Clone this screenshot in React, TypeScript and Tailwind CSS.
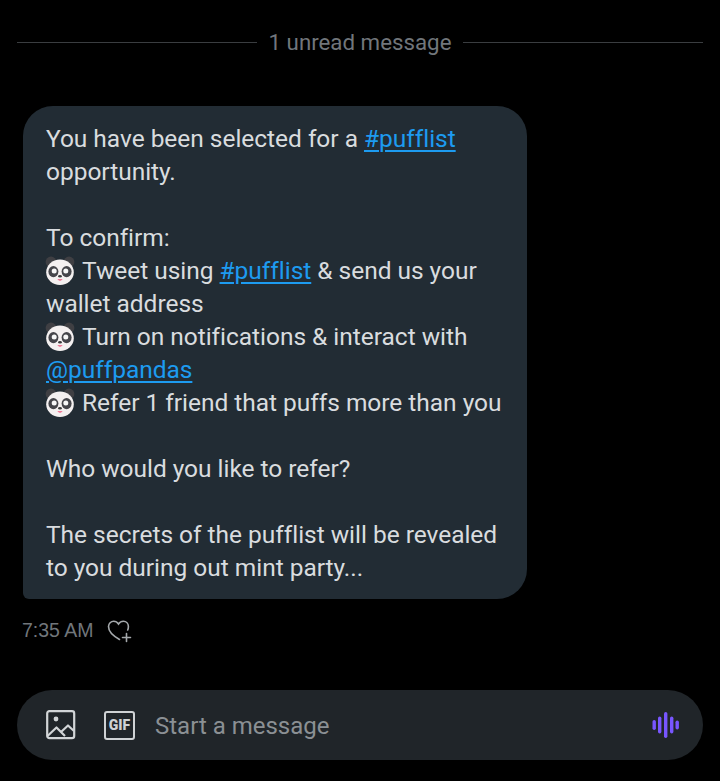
const font = { fontFamily: "Roboto, sans-serif" };

function Panda() {
  return (
    <svg viewBox="0 0 30 30" className="inline-block h-[30px] w-[30px] align-[-7px] mr-[7px] -ml-[1px]">
      <circle cx="6" cy="6" r="5.4" fill="#3f3f43" />
      <circle cx="24" cy="6" r="5.4" fill="#3f3f43" />
      <ellipse cx="15" cy="16.2" rx="13.8" ry="12.8" fill="#f4f0f0" />
      <ellipse cx="8.4" cy="15.6" rx="5" ry="5.6" fill="#45454a" />
      <ellipse cx="21.6" cy="15.6" rx="5" ry="5.6" fill="#45454a" />
      <circle cx="9.2" cy="15" r="2.5" fill="#f7f7f7" />
      <circle cx="20.8" cy="15" r="2.5" fill="#f7f7f7" />
      <ellipse cx="15" cy="20.2" rx="1.9" ry="1.2" fill="#3a3a3a" />
      <path d="M12.4 23c1.2 2.4 4 2.4 5.2 0z" fill="#ee7a97" />
    </svg>
  );
}

function Tag({ children }: { children: string }) {
  return <span className="text-[#1d9bf0] underline underline-offset-[3px] decoration-[1.5px]">{children}</span>;
}

function Line({ children }: { children?: React.ReactNode }) {
  return <div className="h-[33px] whitespace-nowrap">{children}</div>;
}

export default function App() {
  return (
    <div className="flex h-[781px] w-[720px] flex-col overflow-hidden bg-black" style={font}>
      <div className="flex h-[85px] items-center gap-3 pl-[17px] pr-[17px]">
        <div className="h-px flex-1 bg-[#3a3d40]" />
        <span className="text-[22.3px] leading-none text-[#71767b]">1 unread message</span>
        <div className="h-px flex-1 bg-[#3a3d40]" />
      </div>

      <div className="mt-[21px] ml-[23px] w-[504px] rounded-[30px] rounded-bl-[6px] bg-[#222c34] pl-[23px] pt-[16px] pb-[15px] text-[24.5px] leading-[33px] tracking-[-0.03px] text-[#d9dcdf]">
        <Line>You have been selected for a <Tag>#pufflist</Tag></Line>
        <Line>opportunity.</Line>
        <Line />
        <Line>To confirm:</Line>
        <Line><Panda />Tweet using <Tag>#pufflist</Tag> &amp; send us your</Line>
        <Line>wallet address</Line>
        <Line><Panda />Turn on notifications &amp; interact with</Line>
        <Line><Tag>@puffpandas</Tag></Line>
        <Line><Panda />Refer 1 friend that puffs more than you</Line>
        <Line />
        <Line>Who would you like to refer?</Line>
        <Line />
        <Line>The secrets of the pufflist will be revealed</Line>
        <Line>to you during out mint party...</Line>
      </div>

      <div className="mt-[18px] ml-[22px] flex h-[27px] items-center gap-[12px]">
        <span className="text-[19.5px] leading-none text-[#71767b]" style={{ fontFamily: '"Liberation Sans", sans-serif' }}>7:35 AM</span>
        <svg viewBox="0 0 26 26" className="h-[26px] w-[26px]" fill="none" stroke="#a4a8ab" strokeWidth="1.6" strokeLinecap="round">
          <path d="M13.5 21.5C8 18.5 2.5 14 2.5 8.6 2.5 5.4 5 3.2 7.7 3.2c2 0 3.6 1 4.8 2.8 1.2-1.8 2.9-2.8 4.9-2.8 2.8 0 5 2.2 5 5.3 0 1.3-.2 2.4-.7 3.5" />
          <path d="M20.5 15.5v8M16.5 19.5h8" />
        </svg>
      </div>

      <div className="mx-[17px] mt-[46px] flex h-[70px] items-center rounded-[35px] bg-[#202529] pl-[29px] pr-[23px]">
        <svg viewBox="0 0 30 30" className="h-[30px] w-[30px]" fill="none" stroke="#d2d5d7" strokeWidth="2.2" strokeLinejoin="round">
          <rect x="1.2" y="1.2" width="27" height="27" rx="2.2" />
          <circle cx="10" cy="9" r="2.4" fill="#d2d5d7" stroke="none" />
          <path d="M1.5 26 10.5 17.5 19 26M15 22 22 15.5 28 21" />
        </svg>
        <div className="ml-[28px] flex h-[29px] w-[31px] items-center justify-center rounded-[3px] border-[2px] border-[#cfd2d4] text-[14px] font-black leading-none text-[#cfd2d4]">
          GIF
        </div>
        <span className="ml-[20px] flex-1 pt-[1px] text-[24px] leading-none text-[#8b9094]">Start a message</span>
        <svg viewBox="0 0 28 28" className="h-[28px] w-[28px]" fill="#7856ff">
          <rect x="0.5" y="9" width="3.4" height="10" rx="1.7" />
          <rect x="6" y="5.5" width="3.4" height="17" rx="1.7" />
          <rect x="12" y="1" width="3.4" height="26" rx="1.7" />
          <rect x="18" y="5.5" width="3.4" height="17" rx="1.7" />
          <rect x="23.5" y="9.5" width="3.4" height="9" rx="1.7" />
        </svg>
      </div>
    </div>
  );
}
